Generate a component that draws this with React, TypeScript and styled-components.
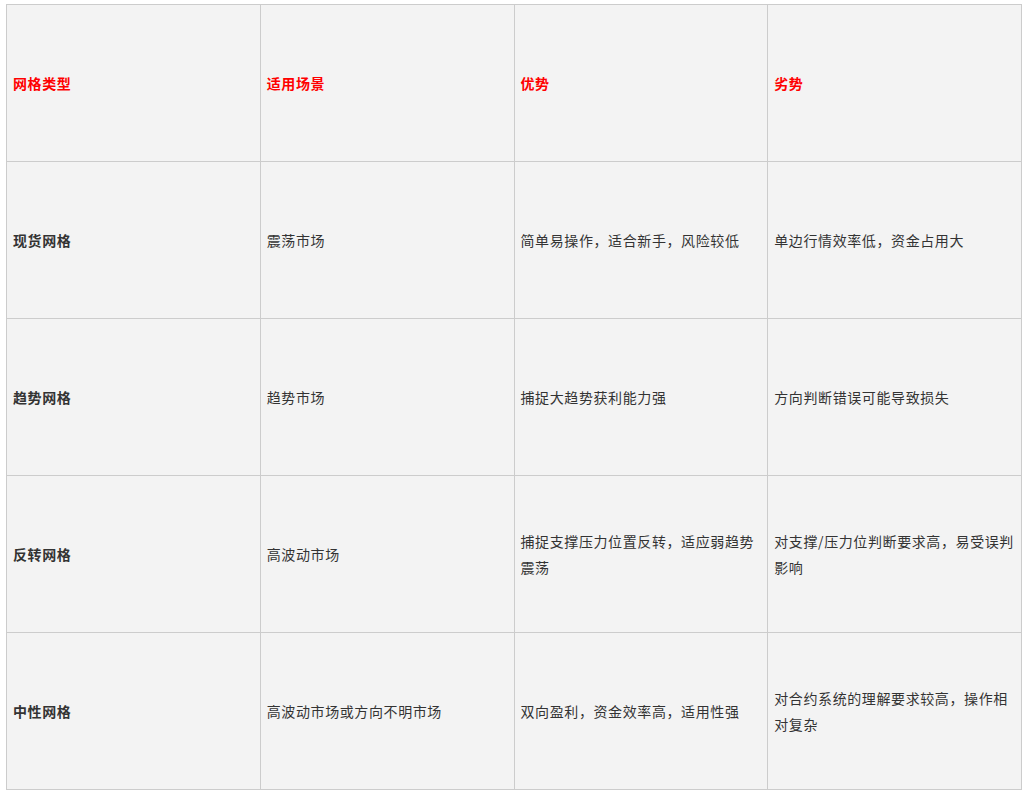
import React from "react";
import styled, { createGlobalStyle } from "styled-components";

const Global = createGlobalStyle`
  body { margin: 0; background: #fff; font-family: "Noto Sans CJK SC", "Microsoft YaHei", sans-serif; }
`;

const Wrap = styled.div`
  padding: 4px 0 0 6px;
`;

const Table = styled.table`
  border-collapse: collapse;
  width: 1016px;
  table-layout: fixed;
  background: #f3f3f3;
`;

const Cell = styled.td<{ $head?: boolean; $bold?: boolean }>`
  border: 1px solid #cccccc;
  height: 156px;
  padding: 0 6px;
  vertical-align: middle;
  font-size: 14px;
  line-height: 26px;
  letter-spacing: 0.6px;
  color: ${(p) => (p.$head ? "#ff0000" : "#333333")};
  font-weight: ${(p) => (p.$head || p.$bold ? 700 : 400)};
  word-break: break-all;
`;

const head = ["网格类型", "适用场景", "优势", "劣势"];
const rows = [
  ["现货网格", "震荡市场", "简单易操作，适合新手，风险较低", "单边行情效率低，资金占用大"],
  ["趋势网格", "趋势市场", "捕捉大趋势获利能力强", "方向判断错误可能导致损失"],
  ["反转网格", "高波动市场", "捕捉支撑压力位置反转，适应弱趋势震荡", "对支撑/压力位判断要求高，易受误判影响"],
  ["中性网格", "高波动市场或方向不明市场", "双向盈利，资金效率高，适用性强", "对合约系统的理解要求较高，操作相对复杂"],
];

export default function App() {
  return (
    <Wrap>
      <Global />
      <Table>
        <tbody>
          <tr>
            {head.map((h) => (
              <Cell key={h} $head>{h}</Cell>
            ))}
          </tr>
          {rows.map((r) => (
            <tr key={r[0]}>
              {r.map((c, i) => (
                <Cell key={i} $bold={i === 0}>{c}</Cell>
              ))}
            </tr>
          ))}
        </tbody>
      </Table>
    </Wrap>
  );
}
